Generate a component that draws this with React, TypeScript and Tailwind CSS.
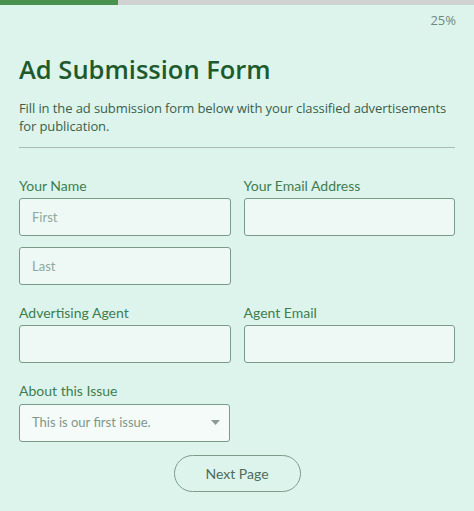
const labelCls = "block text-[14px] leading-[18px] text-[#3f7d4f] mb-[3px]";
const inputCls =
  "w-full h-[38px] rounded-[3px] border border-[#7a9a8a] bg-[#eef9f6] px-[12px] text-[13px] text-[#6f8a7d] placeholder:text-[#8fa89b] outline-none";

function Field({ label, placeholder }: { label?: string; placeholder?: string }) {
  return (
    <div className="flex flex-col">
      {label && <span className={labelCls}>{label}</span>}
      <input className={inputCls} placeholder={placeholder} />
    </div>
  );
}

export default function App() {
  return (
    <div className="w-[474px] h-[511px] overflow-hidden bg-[#ddf4ed] font-['Lato',sans-serif]">
      {/* Progress */}
      <div className="flex h-[5px] w-full bg-[#cfd2d0]">
        <div className="h-full w-[118px] bg-[#4a9150]" />
      </div>
      <div className="flex justify-end pr-[18px] pt-[7px] text-[13px] leading-[16px] text-[#70897c] font-['Open_Sans',sans-serif]">
        25%
      </div>

      <div className="px-[19px]">
        <h1 className="mt-[25px] text-[25.5px] leading-[32px] font-semibold text-[#1e5a2c] font-['Open_Sans',sans-serif]">
          Ad Submission Form
        </h1>
        <p className="mt-[14px] text-[13px] leading-[18px] tracking-[-0.1px] text-[#3b5e4c] font-['Open_Sans',sans-serif]">
          Fill in the ad submission form below with your classified advertisements for publication.
        </p>
        <div className="mt-[12px] h-px w-[436px] bg-[#a9bcb3]" />

        <div className="mt-[29px] grid grid-cols-2 gap-x-[13px] w-[436px]">
          <div className="flex flex-col gap-[11px]">
            <Field label="Your Name" placeholder="First" />
            <input className={inputCls} placeholder="Last" />
          </div>
          <Field label="Your Email Address" />
        </div>

        <div className="mt-[19px] grid grid-cols-2 gap-x-[13px] w-[436px]">
          <Field label="Advertising Agent" />
          <Field label="Agent Email" />
        </div>

        <div className="mt-[19px] w-[211px]">
          <span className={labelCls + " mb-[4px]"}>About this Issue</span>
          <div className="relative">
            <div className={inputCls + " flex items-center bg-[#f4fbf9]"}>
              <span className="text-[#7f9689]">This is our first issue.</span>
            </div>
            <svg
              className="absolute right-[10px] top-[16px]"
              width="9"
              height="5"
              viewBox="0 0 9 5"
            >
              <path d="M0 0 L9 0 L4.5 5 Z" fill="#8c9a93" />
            </svg>
          </div>
        </div>

        <div className="mt-[13px] flex justify-center">
          <button className="h-[37px] w-[127px] rounded-full border border-[#7c9d8c] text-[14px] text-[#4f6b5c] bg-transparent">
            Next Page
          </button>
        </div>
      </div>
    </div>
  );
}
